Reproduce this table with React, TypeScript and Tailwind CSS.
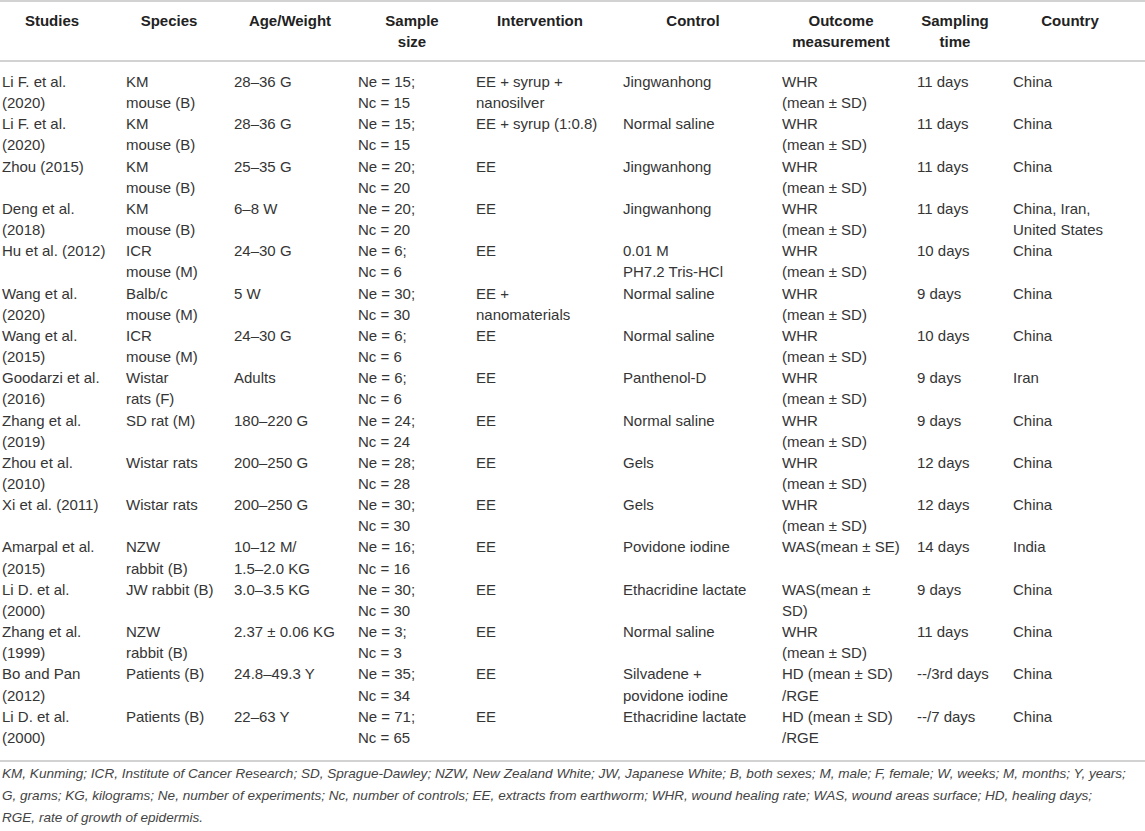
import React from "react";

type Row = string[][];

const rows: Row[] = [
  [["Li F. et al.", "(2020)"], ["KM", "mouse (B)"], ["28–36 G"], ["Ne = 15;", "Nc = 15"], ["EE + syrup +", "nanosilver"], ["Jingwanhong"], ["WHR", "(mean ± SD)"], ["11 days"], ["China"]],
  [["Li F. et al.", "(2020)"], ["KM", "mouse (B)"], ["28–36 G"], ["Ne = 15;", "Nc = 15"], ["EE + syrup (1:0.8)"], ["Normal saline"], ["WHR", "(mean ± SD)"], ["11 days"], ["China"]],
  [["Zhou (2015)"], ["KM", "mouse (B)"], ["25–35 G"], ["Ne = 20;", "Nc = 20"], ["EE"], ["Jingwanhong"], ["WHR", "(mean ± SD)"], ["11 days"], ["China"]],
  [["Deng et al.", "(2018)"], ["KM", "mouse (B)"], ["6–8 W"], ["Ne = 20;", "Nc = 20"], ["EE"], ["Jingwanhong"], ["WHR", "(mean ± SD)"], ["11 days"], ["China, Iran,", "United States"]],
  [["Hu et al. (2012)"], ["ICR", "mouse (M)"], ["24–30 G"], ["Ne = 6;", "Nc = 6"], ["EE"], ["0.01 M", "PH7.2 Tris-HCl"], ["WHR", "(mean ± SD)"], ["10 days"], ["China"]],
  [["Wang et al.", "(2020)"], ["Balb/c", "mouse (M)"], ["5 W"], ["Ne = 30;", "Nc = 30"], ["EE +", "nanomaterials"], ["Normal saline"], ["WHR", "(mean ± SD)"], ["9 days"], ["China"]],
  [["Wang et al.", "(2015)"], ["ICR", "mouse (M)"], ["24–30 G"], ["Ne = 6;", "Nc = 6"], ["EE"], ["Normal saline"], ["WHR", "(mean ± SD)"], ["10 days"], ["China"]],
  [["Goodarzi et al.", "(2016)"], ["Wistar", "rats (F)"], ["Adults"], ["Ne = 6;", "Nc = 6"], ["EE"], ["Panthenol-D"], ["WHR", "(mean ± SD)"], ["9 days"], ["Iran"]],
  [["Zhang et al.", "(2019)"], ["SD rat (M)"], ["180–220 G"], ["Ne = 24;", "Nc = 24"], ["EE"], ["Normal saline"], ["WHR", "(mean ± SD)"], ["9 days"], ["China"]],
  [["Zhou et al.", "(2010)"], ["Wistar rats"], ["200–250 G"], ["Ne = 28;", "Nc = 28"], ["EE"], ["Gels"], ["WHR", "(mean ± SD)"], ["12 days"], ["China"]],
  [["Xi et al. (2011)"], ["Wistar rats"], ["200–250 G"], ["Ne = 30;", "Nc = 30"], ["EE"], ["Gels"], ["WHR", "(mean ± SD)"], ["12 days"], ["China"]],
  [["Amarpal et al.", "(2015)"], ["NZW", "rabbit (B)"], ["10–12 M/", "1.5–2.0 KG"], ["Ne = 16;", "Nc = 16"], ["EE"], ["Povidone iodine"], ["WAS(mean ± SE)"], ["14 days"], ["India"]],
  [["Li D. et al.", "(2000)"], ["JW rabbit (B)"], ["3.0–3.5 KG"], ["Ne = 30;", "Nc = 30"], ["EE"], ["Ethacridine lactate"], ["WAS(mean ±", "SD)"], ["9 days"], ["China"]],
  [["Zhang et al.", "(1999)"], ["NZW", "rabbit (B)"], ["2.37 ± 0.06 KG"], ["Ne = 3;", "Nc = 3"], ["EE"], ["Normal saline"], ["WHR", "(mean ± SD)"], ["11 days"], ["China"]],
  [["Bo and Pan", "(2012)"], ["Patients (B)"], ["24.8–49.3 Y"], ["Ne = 35;", "Nc = 34"], ["EE"], ["Silvadene +", "povidone iodine"], ["HD (mean ± SD)", "/RGE"], ["--/3rd days"], ["China"]],
  [["Li D. et al.", "(2000)"], ["Patients (B)"], ["22–63 Y"], ["Ne = 71;", "Nc = 65"], ["EE"], ["Ethacridine lactate"], ["HD (mean ± SD)", "/RGE"], ["--/7 days"], ["China"]],
];

const headers: string[][] = [
  ["Studies"],
  ["Species"],
  ["Age/Weight"],
  ["Sample", "size"],
  ["Intervention"],
  ["Control"],
  ["Outcome", "measurement"],
  ["Sampling", "time"],
  ["Country"],
];

const widths = [
  "w-[124px]",
  "w-[108px]",
  "w-[124px]",
  "w-[118px]",
  "w-[147px]",
  "w-[159px]",
  "w-[135px]",
  "w-[96px]",
  "w-[134px]",
];

const headPr = [
  "pr-[22px]",
  "pr-[20px]",
  "pr-[10px]",
  "pr-[8px]",
  "pr-[17px]",
  "pr-[17px]",
  "pr-[15px]",
  "pr-[18px]",
  "pr-[18px]",
];

function Lines({ lines }: { lines: string[] }) {
  return (
    <>
      {lines.map((l, i) => (
        <div key={i} className="whitespace-nowrap">
          {l}
        </div>
      ))}
    </>
  );
}

export default function App() {
  return (
    <div
      className="w-[1145px] h-[831px] bg-white overflow-hidden text-[#353535]"
      style={{ fontFamily: '"Liberation Sans", Arial, sans-serif' }}
    >
      <table className="table-fixed border-separate border-spacing-0 w-[1145px]">
        <colgroup>
          {widths.map((w, i) => (
            <col key={i} className={w} />
          ))}
        </colgroup>
        <thead>
          <tr>
            {headers.map((h, i) => (
              <th
                key={i}
                className={
                  "align-top border-t-2 border-b-2 border-[#d2d2d2] pl-[2px] pt-[8px] pb-[8px] text-center font-bold text-[15px] leading-[21px] text-[#222] " +
                  headPr[i]
                }
              >
                <Lines lines={h} />
              </th>
            ))}
          </tr>
        </thead>
        <tbody>
          {rows.map((r, ri) => (
            <tr key={ri}>
              {r.map((c, ci) => (
                <td
                  key={ci}
                  className={
                    "align-top pl-[2px] pr-[4px] text-left text-[15px] leading-[21.15px] " +
                    (ri === 0 ? "pt-[9px] " : "pt-0 ") +
                    (ri === rows.length - 1 ? "pb-[12px] border-b-2 border-[#d2d2d2]" : "pb-0")
                  }
                >
                  <Lines lines={c} />
                </td>
              ))}
            </tr>
          ))}
        </tbody>
      </table>
      <div className="pl-[2px] pt-[1px] italic text-[13.55px] leading-[22px] text-[#444] whitespace-nowrap">
        <div>
          KM, Kunming; ICR, Institute of Cancer Research; SD, Sprague-Dawley; NZW, New Zealand White; JW, Japanese White; B, both sexes; M, male; F, female; W, weeks; M, months; Y, years;
        </div>
        <div>
          G, grams; KG, kilograms; Ne, number of experiments; Nc, number of controls; EE, extracts from earthworm; WHR, wound healing rate; WAS, wound areas surface; HD, healing days;
        </div>
        <div>RGE, rate of growth of epidermis.</div>
      </div>
    </div>
  );
}
